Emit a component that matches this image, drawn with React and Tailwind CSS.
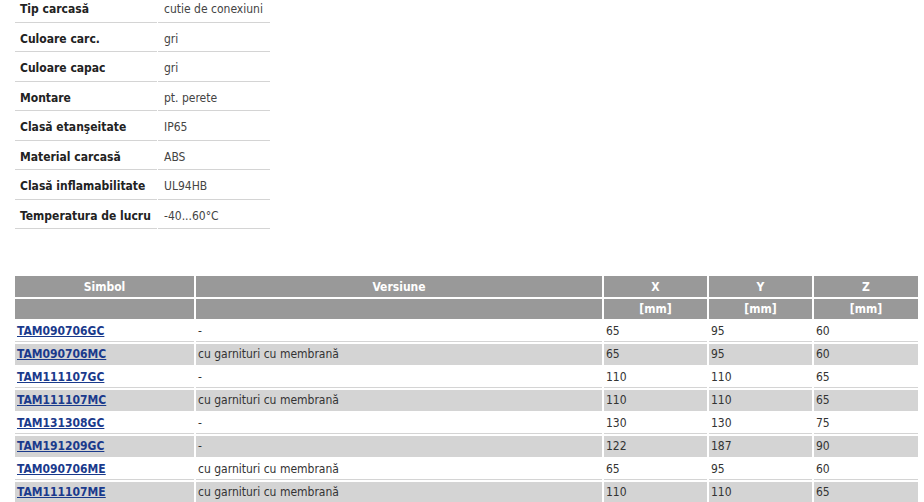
const SPECS = [
  ['Tip carcasă', 'cutie de conexiuni'],
  ['Culoare carc.', 'gri'],
  ['Culoare capac', 'gri'],
  ['Montare', 'pt. perete'],
  ['Clasă etanşeitate', 'IP65'],
  ['Material carcasă', 'ABS'],
  ['Clasă inflamabilitate', 'UL94HB'],
  ['Temperatura de lucru', '-40...60°C'],
];

const ROWS = [
  ['TAM090706GC', '-', 65, 95, 60],
  ['TAM090706MC', 'cu garnituri cu membrană', 65, 95, 60],
  ['TAM111107GC', '-', 110, 110, 65],
  ['TAM111107MC', 'cu garnituri cu membrană', 110, 110, 65],
  ['TAM131308GC', '-', 130, 130, 75],
  ['TAM191209GC', '-', 122, 187, 90],
  ['TAM090706ME', 'cu garnituri cu membrană', 65, 95, 60],
  ['TAM111107ME', 'cu garnituri cu membrană', 110, 110, 65],
];

export default function App() {
  return (
    <div className="bg-white text-[12px] text-[#333] pl-[15px] pr-[6px] h-[502px] overflow-hidden" style={{ fontFamily: '"DejaVu Sans Condensed", "DejaVu Sans", sans-serif' }}>
      {/* Specs */}
      <table className="border-separate border-spacing-x-[1px] border-spacing-y-0 -ml-[1px] -mt-[7px]">
        <tbody>
          {SPECS.map(([k, v]) => (
            <tr key={k}>
              <td className="w-[142px] h-[29.5px] pt-[4px] border-b border-[#d4d4d4] pl-[5px] font-bold text-[#222] whitespace-nowrap">{k}</td>
              <td className="w-[112px] pt-[4px] border-b border-[#d4d4d4] pl-[6px] text-[#444]">{v}</td>
            </tr>
          ))}
        </tbody>
      </table>

      {/* Variants */}
      <table className="mt-[45px] border-separate border-spacing-[2px] -mx-[2px] table-fixed" style={{ width: 'calc(100% + 4px)' }}>
        <colgroup>
          <col className="w-[179px]" />
          <col className="w-[406px]" />
          <col className="w-[103px]" />
          <col className="w-[103px]" />
          <col />
        </colgroup>
        <thead>
          <tr className="bg-[#999] text-white font-bold h-[21px]">
            <th>Simbol</th>
            <th>Versiune</th>
            <th>X</th>
            <th>Y</th>
            <th>Z</th>
          </tr>
          <tr className="bg-[#999] text-white font-bold h-[20px]">
            <th></th>
            <th></th>
            <th>[mm]</th>
            <th>[mm]</th>
            <th>[mm]</th>
          </tr>
        </thead>
        <tbody>
          {ROWS.map((r, i) => (
            <tr key={r[0]} className={i % 2 ? 'bg-[#d4d4d4]' : 'bg-white'}>
              <td className="h-[21px] pl-[2px] pb-[1px] border-b border-[#d4d4d4]">
                <a href="#" className="font-bold underline text-[#1a3a8c]">{r[0]}</a>
              </td>
              <td className="pl-[2px] pb-[1px] border-b border-[#d4d4d4]">{r[1]}</td>
              <td className="pl-[2px] pb-[1px] border-b border-[#d4d4d4]">{r[2]}</td>
              <td className="pl-[2px] pb-[1px] border-b border-[#d4d4d4]">{r[3]}</td>
              <td className="pl-[2px] pb-[1px] border-b border-[#d4d4d4]">{r[4]}</td>
            </tr>
          ))}
        </tbody>
      </table>
    </div>
  );
}
